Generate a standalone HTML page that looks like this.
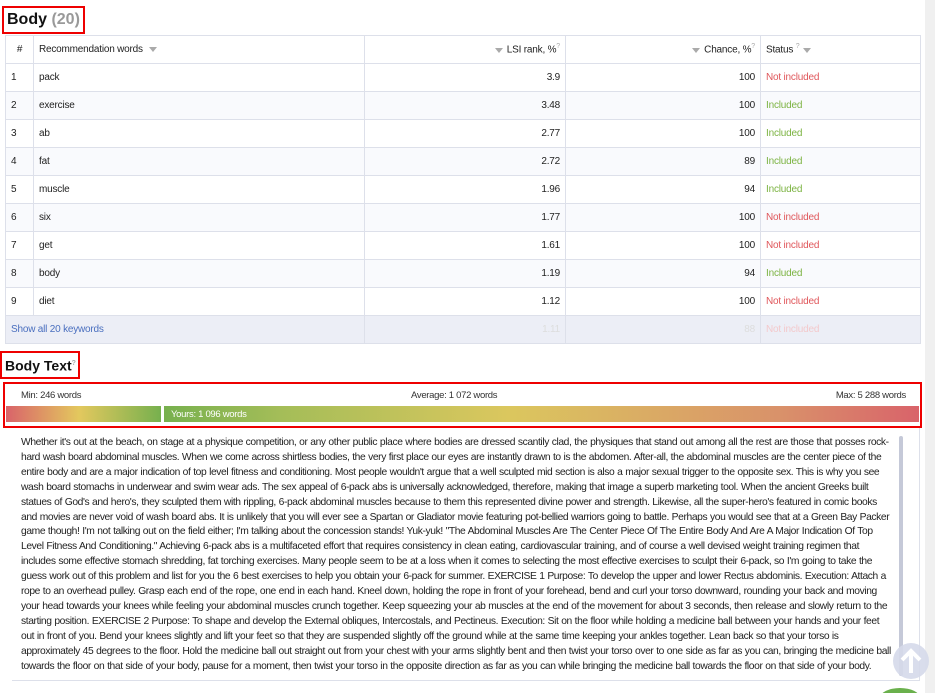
<!DOCTYPE html>
<html><head><meta charset="utf-8"><style>
html,body{margin:0;width:935px;height:693px;overflow:hidden}
body{background:#fff;font-family:"Liberation Sans",sans-serif;position:relative}
.strip{position:absolute;right:0;top:0;width:10px;height:693px;background:#f0f0f0}
h2{position:absolute;margin:0;font-weight:normal;color:#111;border:2px solid #e00;padding:0 3px;font-size:16px;line-height:24px}
table{position:absolute;left:5px;top:35px;width:916px;border-collapse:collapse;font-size:10px;color:#222;letter-spacing:-0.2px}
td,th{border:1px solid #dde0ea;height:27px;padding:0 5px;font-weight:normal;text-align:left}
tr:nth-child(odd) td{background:#f9fafd}
.r{text-align:right}
.ni{color:#e0575b}.in{color:#7cb342}
.tri{display:inline-block;border-left:4px solid transparent;border-right:4px solid transparent;border-top:5px solid #aaa;vertical-align:middle;margin:0 4px}
sup{color:#aaa;font-size:7px}
.show td{background:#eceef6 !important;color:#4a6fbf}
.bar{position:absolute;left:3px;top:382px;width:915px;height:42px;border:2px solid #e00;font-size:9.5px;color:#333;letter-spacing:-0.3px}
.grad{position:absolute;left:1px;top:22px;right:1px;height:16px;background:linear-gradient(90deg,#d9636a 0%,#e3c85e 8%,#76b04e 17%,#a4bd58 30%,#dbc75e 55%,#d9916a 85%,#d9636a 100%)}
.txt{position:absolute;left:21px;top:436px;width:874px;font-size:10.3px;line-height:14.9px;color:#222;height:240px;overflow:hidden;letter-spacing:-0.4px;word-spacing:0.3px}
.box{position:absolute;left:12px;top:428px;width:907px;height:252px;border-bottom:1px solid #dde0ea;border-right:1px solid #dde0ea}
.sb{position:absolute;left:899px;top:436px;width:4px;height:240px;background:#c5c9d8;border-radius:2px}
</style></head><body>
<div class="strip"></div>
<h2 style="left:2px;top:6px;font-weight:bold">Body <span style="color:#999">(20)</span></h2>
<table>
<tr><th style="width:17px;text-align:center">#</th><th style="width:320px">Recommendation words <span class="tri"></span></th><th class="r" style="width:190px"><span class="tri"></span>LSI rank, %<sup>?</sup></th><th class="r" style="width:184px"><span class="tri"></span>Chance, %<sup>?</sup></th><th>Status <sup>?</sup><span class="tri"></span></th></tr>
<tr><td>1</td><td>pack</td><td class="r">3.9</td><td class="r">100</td><td class="ni">Not included</td></tr>
<tr><td>2</td><td>exercise</td><td class="r">3.48</td><td class="r">100</td><td class="in">Included</td></tr>
<tr><td>3</td><td>ab</td><td class="r">2.77</td><td class="r">100</td><td class="in">Included</td></tr>
<tr><td>4</td><td>fat</td><td class="r">2.72</td><td class="r">89</td><td class="in">Included</td></tr>
<tr><td>5</td><td>muscle</td><td class="r">1.96</td><td class="r">94</td><td class="in">Included</td></tr>
<tr><td>6</td><td>six</td><td class="r">1.77</td><td class="r">100</td><td class="ni">Not included</td></tr>
<tr><td>7</td><td>get</td><td class="r">1.61</td><td class="r">100</td><td class="ni">Not included</td></tr>
<tr><td>8</td><td>body</td><td class="r">1.19</td><td class="r">94</td><td class="in">Included</td></tr>
<tr><td>9</td><td>diet</td><td class="r">1.12</td><td class="r">100</td><td class="ni">Not included</td></tr>
<tr class="show"><td colspan="2">Show all 20 keywords</td><td class="r" style="color:#ddd">1.11</td><td class="r" style="color:#ddd">88</td><td style="color:#f3c9cc">Not included</td></tr>
</table>
<h2 style="left:0px;top:351px;font-weight:bold;font-size:14px;line-height:22px;padding:0 2px 0 3px">Body Text<sup>?</sup></h2>
<div class="bar">
<span style="position:absolute;left:16px;top:6px">Min: 246 words</span>
<span style="position:absolute;left:406px;top:6px">Average: 1 072 words</span>
<span style="position:absolute;right:14px;top:6px">Max: 5 288 words</span>
<div class="grad"></div>
<div style="position:absolute;left:156px;top:22px;width:3px;height:16px;background:#fff"></div>
<span style="position:absolute;left:166px;top:25px;color:#fff">Yours: 1 096 words</span>
</div>
<div class="box"></div>
<div class="sb"></div>
<div class="txt">Whether it's out at the beach, on stage at a physique competition, or any other public place where bodies are dressed scantily clad, the physiques that stand out among all the rest are those that posses rock-hard wash board abdominal muscles. When we come across shirtless bodies, the very first place our eyes are instantly drawn to is the abdomen. After-all, the abdominal muscles are the center piece of the entire body and are a major indication of top level fitness and conditioning. Most people wouldn't argue that a well sculpted mid section is also a major sexual trigger to the opposite sex. This is why you see wash board stomachs in underwear and swim wear ads. The sex appeal of 6-pack abs is universally acknowledged, therefore, making that image a superb marketing tool. When the ancient Greeks built statues of God's and hero's, they sculpted them with rippling, 6-pack abdominal muscles because to them this represented divine power and strength. Likewise, all the super-hero's featured in comic books and movies are never void of wash board abs. It is unlikely that you will ever see a Spartan or Gladiator movie featuring pot-bellied warriors going to battle. Perhaps you would see that at a Green Bay Packer game though! I'm not talking out on the field either; I'm talking about the concession stands! Yuk-yuk! "The Abdominal Muscles Are The Center Piece Of The Entire Body And Are A Major Indication Of Top Level Fitness And Conditioning." Achieving 6-pack abs is a multifaceted effort that requires consistency in clean eating, cardiovascular training, and of course a well devised weight training regimen that includes some effective stomach shredding, fat torching exercises. Many people seem to be at a loss when it comes to selecting the most effective exercises to sculpt their 6-pack, so I'm going to take the guess work out of this problem and list for you the 6 best exercises to help you obtain your 6-pack for summer. EXERCISE 1 Purpose: To develop the upper and lower Rectus abdominis. Execution: Attach a rope to an overhead pulley. Grasp each end of the rope, one end in each hand. Kneel down, holding the rope in front of your forehead, bend and curl your torso downward, rounding your back and moving your head towards your knees while feeling your abdominal muscles crunch together. Keep squeezing your ab muscles at the end of the movement for about 3 seconds, then release and slowly return to the starting position. EXERCISE 2 Purpose: To shape and develop the External obliques, Intercostals, and Pectineus. Execution: Sit on the floor while holding a medicine ball between your hands and your feet out in front of you. Bend your knees slightly and lift your feet so that they are suspended slightly off the ground while at the same time keeping your ankles together. Lean back so that your torso is approximately 45 degrees to the floor. Hold the medicine ball out straight out from your chest with your arms slightly bent and then twist your torso over to one side as far as you can, bringing the medicine ball towards the floor on that side of your body, pause for a moment, then twist your torso in the opposite direction as far as you can while bringing the medicine ball towards the floor on that side of your body. Repeat this movement over, alternating side to side until you reach failure. EXERCISE 3 Purpose: To shape and develop the lower Rectus abdominis. Execution: If available, secure your arms in arm harnesses attached to the chin up bar, or if you have no arm harnesses, then grasp the chin up bar using an over-hand grip. Allow your body to hang straight down keeping your feet together. Next, curl your knees up towards your chest.</div>
<div style="position:absolute;left:893px;top:643px;width:36px;height:36px;border-radius:50%;background:#d5d9ea;opacity:.9"></div>
<svg style="position:absolute;left:893px;top:643px" width="36" height="36"><path d="M18 30V9M9 17l9-9 9 9" stroke="#fff" stroke-width="4" fill="none"/></svg>
<div style="position:absolute;left:880px;top:688px;width:40px;height:20px;border-radius:50%;background:#6ab04c"></div>
</body></html>
